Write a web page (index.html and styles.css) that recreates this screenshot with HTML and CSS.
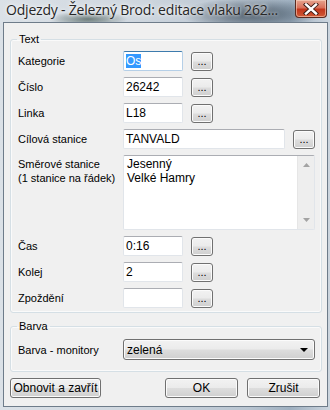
FILE: index.html
```html
<!DOCTYPE html>
<html lang="cs">
<head>
<meta charset="utf-8">
<title>Odjezdy</title>
<link rel="stylesheet" href="styles.css">
</head>
<body>
<div class="window">
  <div class="titlebar">
    <span class="title">Odjezdy - Železný Brod: editace vlaku 262...</span>
    <div class="close">
      <svg width="18" height="12" viewBox="0 0 18 12">
        <path d="M4 1.5 L14 10.5 M14 1.5 L4 10.5" stroke="#3a1a14" stroke-width="4.2" stroke-linecap="square" fill="none"/>
        <path d="M4 1.5 L14 10.5 M14 1.5 L4 10.5" stroke="#ffffff" stroke-width="2.4" stroke-linecap="square" fill="none"/>
      </svg>
    </div>
  </div>
  <div class="client">
    <fieldset class="group group-text">
      <legend>Text</legend>
      <div class="form">
        <label class="lbl">Kategorie</label>
        <div class="field"><div class="input short focus"><span class="sel">Os</span></div><div class="btn dots">...</div></div>

        <label class="lbl">Číslo</label>
        <div class="field"><div class="input short">26242</div><div class="btn dots">...</div></div>

        <label class="lbl">Linka</label>
        <div class="field"><div class="input short">L18</div><div class="btn dots">...</div></div>

        <label class="lbl">Cílová stanice</label>
        <div class="field"><div class="input wide">TANVALD</div><div class="btn dots">...</div></div>

        <label class="lbl lbl-top">Směrové stanice<br>(1 stanice na řádek)</label>
        <div class="memo">
          <div class="memo-text">Jesenný<br>Velké Hamry</div>
          <div class="scrollbar">
            <svg class="arrow" width="7" height="4" viewBox="0 0 7 4"><path d="M3.5 0 L7 4 L0 4 Z" fill="#a3a3a3"/></svg>
            <svg class="arrow" width="7" height="4" viewBox="0 0 7 4"><path d="M0 0 L7 0 L3.5 4 Z" fill="#a3a3a3"/></svg>
          </div>
        </div>

        <label class="lbl">Čas</label>
        <div class="field"><div class="input short">0:16</div><div class="btn dots">...</div></div>

        <label class="lbl">Kolej</label>
        <div class="field"><div class="input short">2</div><div class="btn dots">...</div></div>

        <label class="lbl">Zpoždění</label>
        <div class="field"><div class="input short"></div><div class="btn dots">...</div></div>
      </div>
    </fieldset>

    <fieldset class="group group-barva">
      <legend>Barva</legend>
      <div class="form">
        <label class="lbl">Barva - monitory</label>
        <div class="combo">
          <span>zelená</span>
          <svg width="8" height="4" viewBox="0 0 8 4"><path d="M0 0 L8 0 L4 4 Z" fill="#000"/></svg>
        </div>
      </div>
    </fieldset>

    <div class="actions">
      <div class="btn action obnovit">Obnovit a zavřít</div>
      <div class="btn action ok">OK</div>
      <div class="btn action">Zrušit</div>
    </div>
  </div>
</div>
</body>
</html>
```

FILE: styles.css
```css
* { box-sizing: border-box; }

html, body {
  margin: 0;
  padding: 0;
  background: #c9d3dd;
}

.window {
  width: 330px;
  height: 410px;
  padding: 0 2px 3px 3px;
  display: flex;
  flex-direction: column;
  background:
    radial-gradient(ellipse 40px 8px at 88px 19px, rgba(70, 90, 85, 0.75), rgba(70, 90, 85, 0) 100%),
    radial-gradient(ellipse 70px 16px at 250px 14px, rgba(45, 62, 78, 0.85), rgba(45, 62, 78, 0) 100%),
    linear-gradient(90deg, #dbe1e7 0%, #cfd7df 40%, #b9c5d1 75%, #9fb0c0 88%, #cdd6df 100%);
}

.titlebar {
  height: 22px;
  display: flex;
  align-items: flex-start;
  flex: none;
}

.title {
  flex: 1;
  min-width: 0;
  white-space: nowrap;
  padding-left: 3px;
  font-family: "Open Sans", "Noto Sans", sans-serif;
  font-size: 14px;
  letter-spacing: -0.2px;
  line-height: 20px;
  color: #262626;
  text-shadow: 0 0 6px rgba(255, 255, 255, 0.9), 0 0 3px rgba(255, 255, 255, 0.9);
}

.close {
  flex: none;
  width: 32px;
  height: 18px;
  margin-right: 1px;
  border: 1px solid #5a2a20;
  border-top: none;
  border-radius: 0 0 4px 4px;
  background: linear-gradient(#e6a48f 0%, #d9705a 45%, #c2361c 55%, #cf5a36 100%);
  box-shadow: inset 0 0 0 1px rgba(255, 220, 200, 0.55);
  display: flex;
  align-items: center;
  justify-content: center;
}

.client {
  flex: 1;
  background: #f0f0f0;
  border: 1px solid #6e7c8a;
  display: flex;
  flex-direction: column;
  font-family: "Liberation Sans", Arial, sans-serif;
  font-size: 11px;
  color: #000;
}

.group {
  margin: 0 5px 0 6px;
  border: 1px solid #d5dfe5;
  border-radius: 3px;
  padding: 0 6px 0 7px;
  min-width: 0;
  box-shadow: inset 0 0 0 1px #fafafa;
}

.group legend {
  padding: 0 2px;
  margin-left: -1px;
  line-height: 13px;
  font-size: 11px;
}

.group-text {
  margin-top: 10px;
  padding-top: 5px;
  padding-bottom: 4px;
}

.group-barva {
  margin-top: 7px;
  padding-top: 6px;
  padding-bottom: 11px;
}

.form {
  display: grid;
  grid-template-columns: 105px 1fr;
  row-gap: 6px;
  align-items: center;
}

.lbl {
  line-height: 14px;
  white-space: nowrap;
}

.lbl-top {
  align-self: start;
  padding-top: 2px;
}

.field {
  display: flex;
  align-items: center;
  gap: 8px;
  height: 20px;
}

.input {
  height: 20px;
  border: 1px solid #e1e5ea;
  border-top-color: #abadb3;
  border-radius: 2px;
  background: #fff;
  padding: 0 2px;
  line-height: 18px;
  font-size: 12px;
  white-space: nowrap;
  overflow: hidden;
}

.input.short { width: 60px; }
.input.wide { width: 162px; }

.input.focus {
  border-color: #b5cfe7;
  border-top-color: #3d7bad;
}

.sel {
  background: #3399ff;
  color: #fff;
}

.btn {
  border: 1px solid #707070;
  border-radius: 3px;
  background: linear-gradient(#f2f2f2 0%, #ebebeb 48%, #dddddd 52%, #cfcfcf 100%);
  box-shadow: inset 0 0 0 1px #fbfbfb;
  display: flex;
  align-items: center;
  justify-content: center;
  color: #000;
}

.dots {
  width: 22px;
  height: 19px;
  flex: none;
  font-size: 11px;
  line-height: 19px;
  padding-top: 1px;
}

.memo {
  height: 75px;
  border: 1px solid #e1e5ea;
  border-top-color: #abadb3;
  border-radius: 2px;
  background: #fff;
  display: flex;
}

.memo-text {
  flex: 1;
  padding: 1px 3px;
  line-height: 14px;
  font-size: 12px;
}

.scrollbar {
  width: 17px;
  flex: none;
  background: #eeeeee;
  border-left: 1px solid #e6e6e6;
  display: flex;
  flex-direction: column;
  justify-content: space-between;
  align-items: center;
  padding: 7px 0 7px;
}

.combo {
  height: 21px;
  border: 1px solid #707070;
  border-radius: 3px;
  background: linear-gradient(#f2f2f2 0%, #ebebeb 48%, #dddddd 52%, #cfcfcf 100%);
  box-shadow: inset 0 0 0 1px #fbfbfb;
  display: flex;
  align-items: center;
  justify-content: space-between;
  padding: 0 6px 0 3px;
  font-size: 12px;
}

.actions {
  display: flex;
  margin: 6px 7px 0 6px;
  gap: 9px;
}

.action {
  height: 20px;
  width: 73px;
  font-size: 12px;
}

.obnovit {
  width: 91px;
  margin-right: auto;
}
```
